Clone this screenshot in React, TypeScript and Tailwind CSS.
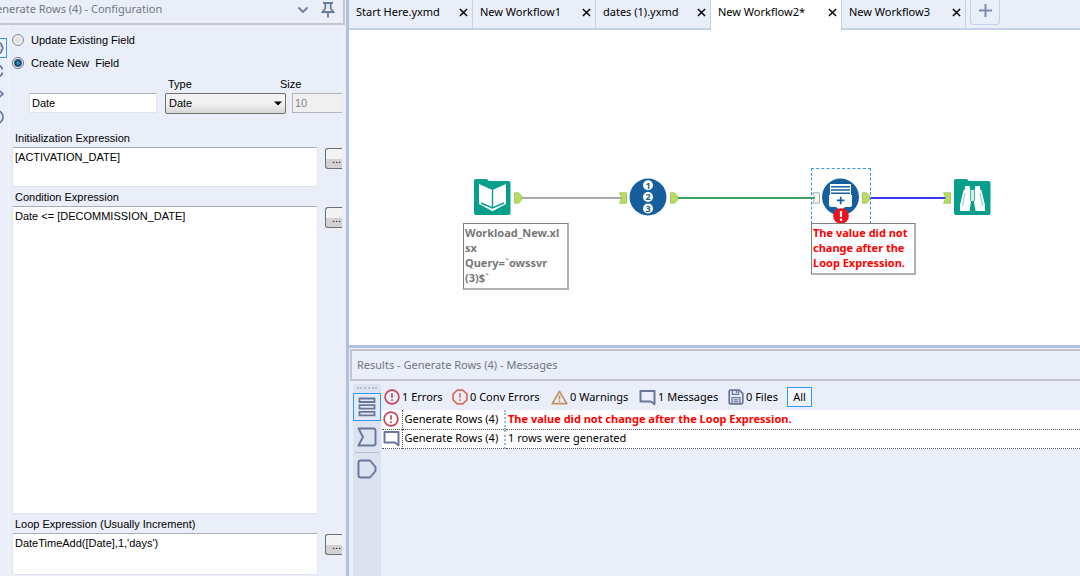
import { useState, type ReactNode } from "react";

const SEGOE = "font-['Noto_Sans',sans-serif]";
const SANS = "font-['Liberation_Sans',sans-serif]";

function CloseIcon() {
  return (
    <svg width="9" height="9" viewBox="0 0 10 10" fill="none" stroke="#000" strokeWidth="1.6">
      <path d="M1 1 9 9M9 1 1 9" />
    </svg>
  );
}

function ErrorIcon({ color = "#c8475c", size = 16 }: { color?: string; size?: number }) {
  return (
    <svg width={size} height={size} viewBox="0 0 16 16" fill="none" stroke={color} strokeWidth="1.7">
      <circle cx="8" cy="8" r="6.9" />
      <path d="M8 4.2V8.8M8 10.2V12" />
    </svg>
  );
}

function OctagonIcon() {
  return (
    <svg width="16" height="16" viewBox="0 0 16 16" fill="none" stroke="#dc6f5c" strokeWidth="1.7" strokeLinejoin="round">
      <path d="M5.2 1.1H10.8L14.9 5.2V10.8L10.8 14.9H5.2L1.1 10.8V5.2Z" />
      <path d="M8 4.2V8.8M8 10.2V12" />
    </svg>
  );
}

function WarningIcon() {
  return (
    <svg width="17" height="15" viewBox="0 0 17 15" fill="none" stroke="#c4925f" strokeWidth="1.7" strokeLinejoin="round">
      <path d="M8.5 1.4 15.8 13.7H1.2Z" />
      <path d="M8.5 5.4V9.5M8.5 10.5V12" />
    </svg>
  );
}

function MessageIcon() {
  return (
    <svg width="17" height="17" viewBox="0 0 17 17" fill="none" stroke="#6a7699" strokeWidth="2" strokeLinejoin="round">
      <path d="M1.5 2H15.5V15.2L11.8 12.5H1.5Z" />
    </svg>
  );
}

function SaveIcon() {
  return (
    <svg width="16" height="16" viewBox="0 0 16 16" fill="none" stroke="#6a7699" strokeWidth="1.7" strokeLinejoin="round">
      <path d="M1.2 2.4Q1.2 1.2 2.4 1.2H11.4L14.8 4.6V13.6Q14.8 14.8 13.6 14.8H2.4Q1.2 14.8 1.2 13.6Z" />
      <path d="M4.4 1.2V5.4H10.6V1.2M8.4 2V4M4 14.8V8.6H12V14.8M5.6 10.8H10.4M5.6 12.8H10.4" strokeWidth="1.3" />
    </svg>
  );
}

function Tab({ name, width, active = false }: { name: string; width: string; active?: boolean }) {
  return (
    <div
      className={`${width} flex shrink-0 items-center justify-between border-r border-[#c5d0e6] pr-1 pl-[7px] ${
        active ? "bg-white pb-1.5" : "border-b-2 bg-[#e9eef9] pb-1"
      }`}
    >
      <button className="text-[11px] leading-5 whitespace-nowrap">{name}</button>
      <button aria-label={`Close ${name}`}>
        <CloseIcon />
      </button>
    </div>
  );
}

function Expression({ id, label, value, size }: { id: string; label: string; value: string; size: string }) {
  return (
    <div className={`flex flex-col gap-px ${size}`}>
      <label htmlFor={id} className="pl-[3px] leading-4">
        {label}
      </label>
      <div className="flex flex-1 items-start gap-[7px]">
        <textarea
          id={id}
          defaultValue={value}
          spellCheck={false}
          className="h-full min-w-0 flex-1 resize-none rounded-xs border border-[#dfe4ee] border-t-[#a9adb8] bg-white px-0.5 py-px leading-4 outline-none"
        />
        <button
          aria-label={`Edit ${label}`}
          className="mt-px h-[21px] w-[17px] overflow-hidden rounded-l-[3px] border border-r-0 border-[#707070] bg-linear-to-b from-[#f3f3f3] from-50% to-[#d2d2d2] to-50% pl-1.5 text-left leading-5"
        >
          ...
        </button>
      </div>
    </div>
  );
}

function RadioRow({ id, label, checked, onChange }: { id: string; label: string; checked: boolean; onChange: () => void }) {
  return (
    <div className="flex h-5 items-center gap-[7px]">
      <input
        type="radio"
        id={id}
        name="fieldMode"
        checked={checked}
        onChange={onChange}
        className="size-3 appearance-none rounded-full border border-[#8b8f94] bg-radial from-[#d8dadd] to-[#f6f6f6] checked:border-[#6d7b86] checked:from-[#35b5ea] checked:from-0% checked:via-[#123c5c] checked:via-45% checked:to-[#f1f3f5] checked:to-65%"
      />
      <label htmlFor={id} className="whitespace-pre">
        {label}
      </label>
    </div>
  );
}

function ConfigurationPanel() {
  const [mode, setMode] = useState("create");
  return (
    <aside className="flex w-[346px] shrink-0 flex-col pr-px">
      <header className="flex h-[25px] shrink-0 items-center overflow-hidden border-r-2 border-b-2 border-[#c3c5c9] pr-2 pb-1">
        <h2 className={`-ml-3 flex-1 text-[11px] whitespace-nowrap text-[#727780] ${SEGOE}`}>Generate Rows (4) - Configuration</h2>
        <button aria-label="Panel menu" className="mr-3">
          <svg width="12" height="8" viewBox="0 0 12 8" fill="none" stroke="#697a9c" strokeWidth="1.8">
            <path d="M1.5 1.5 6 6 10.5 1.5" />
          </svg>
        </button>
        <button aria-label="Pin panel">
          <svg width="14" height="17" viewBox="0 0 14 17" fill="none" stroke="#697a9c" strokeWidth="1.8">
            <path d="M2 2H12M4.3 2V7.5L1.5 11H12.5L9.7 7.5V2M7 11V16.5" />
          </svg>
        </button>
      </header>
      <div className="flex min-h-0 flex-1">
        <nav className="flex w-2 shrink-0 flex-col items-end gap-[3px] overflow-hidden pt-[13px] pr-px">
          <button aria-label="Configuration" className="flex h-5 w-6 shrink-0 items-center justify-end border border-[#3298fd] bg-[#f1f5fc] pr-0.5">
            <svg width="16" height="16" viewBox="0 0 16 16" fill="none" stroke="#697a9c" strokeWidth="1.8">
              <circle cx="8" cy="8" r="2" />
              <path d="M8 1.5A2.2 2.2 0 0 1 11.5 3A2.2 2.2 0 0 1 13.5 6A2.2 2.2 0 0 1 13.5 10A2.2 2.2 0 0 1 11.5 13A2.2 2.2 0 0 1 8 14.5A2.2 2.2 0 0 1 4.5 13A2.2 2.2 0 0 1 2.5 10A2.2 2.2 0 0 1 2.5 6A2.2 2.2 0 0 1 4.5 3A2.2 2.2 0 0 1 8 1.5Z" />
            </svg>
          </button>
          <button aria-label="Navigation" className="h-5 pr-[3px]">
            <svg width="16" height="16" viewBox="0 0 16 16" fill="none" stroke="#697a9c" strokeWidth="1.8">
              <path d="M10.5 2Q14 3.5 14.5 6.5M14.5 9.5Q14 12.5 10.5 14M5.5 2Q2 3.5 1.5 6.5M1.5 9.5Q2 12.5 5.5 14" />
            </svg>
          </button>
          <button aria-label="XML" className="h-5 pr-[3px]">
            <svg width="16" height="16" viewBox="0 0 16 16" fill="none" stroke="#697a9c" strokeWidth="1.8">
              <path d="M6 4 2 8 6 12M11 4.5 15 8 11 11.5" />
            </svg>
          </button>
          <button aria-label="Help" className="h-5 pr-[3px]">
            <svg width="16" height="16" viewBox="0 0 16 16" fill="none" stroke="#697a9c" strokeWidth="1.8">
              <circle cx="8.5" cy="8" r="6.5" />
              <path d="M6 6.5Q6 4.5 8 4.5T10 6.5T8 9M8 10.5V12" />
            </svg>
          </button>
        </nav>
        <form className={`mr-[3px] flex min-w-0 flex-1 flex-col border-l border-[#f1f4f9] pt-[5px] pb-px pl-[3px] text-[11px] ${SANS}`}>
          <div className="flex flex-col gap-[3px]">
            <RadioRow id="update" label="Update Existing Field" checked={mode === "update"} onChange={() => setMode("update")} />
            <RadioRow id="create" label="Create New  Field" checked={mode === "create"} onChange={() => setMode("create")} />
          </div>
          <div className="mt-[3px] flex items-end pl-[17px]">
            <input
              aria-label="Field name"
              defaultValue="Date"
              className="mr-2 mb-px h-5 w-32 border border-[#dfe4ee] border-t-[#a9adb8] bg-white px-0.5 outline-none"
            />
            <div className="mr-1.5 flex flex-col gap-px">
              <label htmlFor="type" className="pl-[3px] leading-4">
                Type
              </label>
              <div className="relative">
                <select
                  id="type"
                  defaultValue="Date"
                  className="block h-[21px] w-[121px] appearance-none rounded-xs border border-[#707070] bg-linear-to-b from-[#f2f2f2] from-50% to-[#d6d6d6] pl-[3px] outline-none"
                >
                  <option>Date</option>
                  <option>DateTime</option>
                  <option>Int32</option>
                </select>
                <svg className="pointer-events-none absolute top-2 right-1" width="8" height="5" viewBox="0 0 8 5">
                  <path d="M0 .5H8L4 4.5Z" />
                </svg>
              </div>
            </div>
            <div className="-ml-3 mb-px flex min-w-0 flex-1 flex-col gap-px">
              <label htmlFor="size" className="leading-4">
                Size
              </label>
              <div className="flex pl-3">
                <input
                  id="size"
                  disabled
                  defaultValue="10"
                  className="h-5 w-full min-w-0 border border-r-0 border-[#b4b6ba] bg-[#f0f0f0] px-0.5 text-[#838383]"
                />
              </div>
            </div>
          </div>
          <div className="mt-4 flex min-h-0 flex-1 flex-col gap-0.5">
            <Expression id="init" label="Initialization Expression" value="[ACTIVATION_DATE]" size="h-[57px] shrink-0" />
            <Expression id="condition" label="Condition Expression" value="Date <= [DECOMMISSION_DATE]" size="min-h-20 flex-1" />
            <Expression id="loop" label="Loop Expression (Usually Increment)" value="DateTimeAdd([Date],1,'days')" size="h-[59px] shrink-0" />
          </div>
        </form>
      </div>
    </aside>
  );
}

function Output() {
  return (
    <svg width="8" height="12" viewBox="0 0 8 12" fill="#b9dc62" stroke="#9cc04b" strokeWidth=".8">
      <path d="M.5.8H4.5L7.5 4V8L4.5 11.2H.5Z" />
    </svg>
  );
}

function Input({ muted = false }: { muted?: boolean }) {
  return (
    <svg width="8" height="12" viewBox="0 0 8 12" fill={muted ? "#f3f3f3" : "#b9dc62"} stroke={muted ? "#9a9a9a" : "#9cc04b"} strokeWidth=".8">
      <path d="M.5.8H7.5V11.2H.5L2.8 6Z" />
    </svg>
  );
}

function Place({ at, children }: { at: string; children: ReactNode }) {
  return <div className={`absolute ${at}`}>{children}</div>;
}

function Canvas() {
  return (
    <main className="relative min-h-0 flex-1 overflow-hidden bg-white">
      <Place at="left-[170px] top-[166px]">
        <svg width="430" height="4" viewBox="0 0 430 4" strokeWidth="2" fill="none">
          <path d="M0 2H108" stroke="#a9a9a9" />
          <path d="M157 2H300" stroke="#3aa35c" />
          <path d="M350 2H430" stroke="#3a36f0" />
        </svg>
      </Place>

      <Place at="left-[125px] top-[148px]">
        <svg width="37" height="38" viewBox="0 0 37 38">
          <path d="M0 3Q0 1 2 1H12Q14 1 14.5 3H34.5Q36.5 3 36.5 5V35Q36.5 37 34.5 37H2Q0 37 0 35Z" fill="#079e8c" />
          <path d="M5 6 18.5 12 32 6V26L18.5 33.2 5 26Z" fill="#fff" />
          <path d="M18.5 12V29" stroke="#079e8c" strokeWidth="1.4" />
          <path d="M7 25 18.5 30 30 25" fill="none" stroke="#079e8c" strokeWidth="1.6" />
        </svg>
      </Place>
      <Place at="left-[165px] top-[162px]"><Output /></Place>
      <Place at="left-[114px] top-[193px]">
        <p className="w-[106px] border-t border-r-2 border-b-2 border-l border-[#808080] border-r-[#b0b0b0] border-b-[#b0b0b0] bg-white px-px py-px pb-[3px] text-[11px] leading-[15px] font-bold break-all text-[#777]">
          Workload_New.xl
          <br />
          sx
          <br />
          Query=`owssvr
          <br />
          (3)$`
        </p>
      </Place>

      <Place at="left-[270px] top-[162px]"><Input /></Place>
      <Place at="left-[280px] top-[148px]">
        <svg width="38" height="38" viewBox="0 0 38 38">
          <circle cx="19" cy="19" r="18.5" fill="#155f9e" />
          <g fill="#fff">
            <circle cx="19" cy="7.3" r="5" />
            <circle cx="19" cy="19" r="5" />
            <circle cx="19" cy="30.5" r="5" />
          </g>
          <g fill="#155f9e" className={SEGOE} fontSize="9" fontWeight="700" textAnchor="middle">
            <text x="19" y="10.6">1</text>
            <text x="19" y="22.3">2</text>
            <text x="19" y="33.8">3</text>
          </g>
        </svg>
      </Place>
      <Place at="left-[321px] top-[162px]"><Output /></Place>

      <Place at="left-[462px] top-[138px]">
        <div className="h-14 w-[60px] border border-dashed border-[#3298e0]" />
      </Place>
      <Place at="left-[463px] top-[162px]"><Input muted /></Place>
      <Place at="left-[472px] top-[148px]">
        <svg width="38" height="46" viewBox="0 0 38 46">
          <circle cx="19.5" cy="19" r="18.5" fill="#155f9e" />
          <path d="M9 6H30V17.5H9Z" fill="#fff" />
          <path d="M10 8.7H29M10 12H29M10 15.3H29" stroke="#155f9e" strokeWidth="1.4" />
          <path d="M8 17H31V27Q31 29 29 29H24L19.5 33 15 29H10Q8 29 8 27Z" fill="#fff" />
          <path d="M16 22.4H23.5M19.7 18.7V26.2" stroke="#155f9e" strokeWidth="1.7" />
          <circle cx="20" cy="38" r="7.8" fill="#ed1119" />
          <path d="M20 33V39M20 40.6V43" stroke="#fff" strokeWidth="2.2" />
        </svg>
      </Place>
      <Place at="left-[513px] top-[162px]"><Output /></Place>
      <Place at="left-[462px] top-[193px]">
        <p className="w-[105px] border-t border-r-2 border-b-2 border-l border-[#808080] border-r-[#b0b0b0] border-b-[#b0b0b0] bg-white px-px py-px pb-[3px] text-[11px] leading-[15px] font-bold whitespace-nowrap text-[#f00]">
          The value did not
          <br />
          change after the
          <br />
          Loop Expression.
        </p>
      </Place>

      <Place at="left-[594px] top-[162px]"><Input /></Place>
      <Place at="left-[605px] top-[148px]">
        <svg width="37" height="38" viewBox="0 0 37 38">
          <path d="M0 3Q0 1 2 1H12Q14 1 14.5 3H34.5Q36.5 3 36.5 5V35Q36.5 37 34.5 37H2Q0 37 0 35Z" fill="#079e8c" />
          <g fill="#fff">
            <path d="M11 8H15.8V11L17 12.5V24L15.5 33H6V27L9.5 12.5 11 11Z" />
            <path d="M26 8H21.2V11L20 12.5V24L21.5 33H31V27L27.5 12.5 26 11Z" />
            <path d="M16.9 12H20.1V23H16.9Z" fill="#d9f2ee" />
          </g>
          <path d="M11 15 8.5 28M26 15 28.5 28" stroke="#8fd4ca" strokeWidth="1.2" />
          <path d="M16.6 12V23M20.4 12V23" stroke="#079e8c" strokeWidth=".8" />
        </svg>
      </Place>
    </main>
  );
}

function ResultsPanel() {
  return (
    <section className="flex h-[231px] shrink-0 flex-col border-t-3 border-[#b1c0e0] pl-px">
      <header className="mt-px flex h-8 shrink-0 items-center border-2 border-r-0 border-[#c3c5c9] pl-[5px]">
        <h2 className="text-[11px] text-[#727780]">Results - Generate Rows (4) - Messages</h2>
      </header>
      <div className="flex min-h-0 flex-1 pt-[3px] pl-[3px]">
        <nav className="flex w-7 shrink-0 flex-col items-center rounded-t-sm bg-[#dbe2f0] pt-[3px]">
          <div className="mb-1 h-0 w-5 border-t-2 border-dotted border-[#b9c0cd]" />
          <button aria-label="Messages" className="flex h-7 w-7 items-center justify-center border border-[#3298fd] bg-[#e3eaf7]">
            <svg width="18" height="20" viewBox="0 0 18 20" fill="none" stroke="#6a7699" strokeWidth="1.8">
              <path d="M1.5 1.5H16.5V5H1.5ZM1.5 8.2H16.5V11.7H1.5ZM1.5 14.9H16.5V18.4H1.5Z" />
            </svg>
          </button>
          <button aria-label="Input data" className="flex h-[31px] items-center">
            <svg width="20" height="20" viewBox="0 0 20 20" fill="none" stroke="#6a7699" strokeWidth="1.9" strokeLinejoin="round">
              <path d="M1.5 1.5H16.5Q18.5 1.5 18.5 3.5V16.5Q18.5 18.5 16.5 18.5H1.5L6 10Z" />
            </svg>
          </button>
          <div className="h-px w-6 bg-[#babec6]" />
          <button aria-label="Output data" className="flex h-8 items-center">
            <svg width="20" height="20" viewBox="0 0 20 20" fill="none" stroke="#6a7699" strokeWidth="1.9" strokeLinejoin="round">
              <path d="M3.5 1.5H13L18.5 8V12L13 18.5H3.5Q1.5 18.5 1.5 16.5V3.5Q1.5 1.5 3.5 1.5Z" />
            </svg>
          </button>
        </nav>
        <div className="min-w-0 flex-1 pl-px">
          <div className="flex h-[26px] items-center pl-0.5 text-[11px] whitespace-nowrap">
            <button className="flex w-17 items-center gap-0.5"><ErrorIcon />1 Errors</button>
            <button className="flex w-[99px] items-center gap-0.5"><OctagonIcon />0 Conv Errors</button>
            <button className="flex w-[88px] items-center gap-0.5"><WarningIcon />0 Warnings</button>
            <button className="flex w-[89px] items-center gap-0.5"><MessageIcon />1 Messages</button>
            <button className="flex w-[59px] items-center gap-0.5"><SaveIcon />0 Files</button>
            <button className="h-5 w-[25px] border border-[#3298fd] bg-[#f1f5fc] leading-4">All</button>
          </div>
          <table className="w-full border-collapse bg-white text-[11px] whitespace-nowrap">
            <tbody>
              <tr className="h-[19px] border-b border-dotted border-[#555]">
                <td className="w-5 border-r border-dotted border-[#555] p-0 pl-px"><ErrorIcon /></td>
                <td className="w-[103px] border-r-2 border-dotted border-[#9db8dd] p-0 pl-0.5">Generate Rows (4)</td>
                <td className="p-0 pl-0.5 font-bold text-[#f00]">The value did not change after the Loop Expression.</td>
              </tr>
              <tr className="h-[19px] border-b border-dotted border-[#555]">
                <td className="border-r border-dotted border-[#555] p-0 pl-px"><MessageIcon /></td>
                <td className="border-r-2 border-dotted border-[#9db8dd] p-0 pl-0.5">Generate Rows (4)</td>
                <td className="p-0 pl-0.5">1 rows were generated</td>
              </tr>
            </tbody>
          </table>
        </div>
      </div>
    </section>
  );
}

export default function App() {
  return (
    <div className={`flex h-screen overflow-hidden bg-[#e9eef9] text-black ${SEGOE}`}>
      <ConfigurationPanel />
      <div className="flex min-w-0 flex-1 flex-col border-l-3 border-[#b1c0e0]">
        <div className="flex h-[30px] shrink-0">
          <Tab name="Start Here.yxmd" width="w-[124px]" />
          <Tab name="New Workflow1" width="w-[123px]" />
          <Tab name="dates (1).yxmd" width="w-[115px]" />
          <Tab name="New Workflow2*" width="w-[131px]" active />
          <Tab name="New Workflow3" width="w-[124px]" />
          <div className="flex-1 border-b-2 border-[#c5d0e6] pl-1">
            <button aria-label="New tab" className="flex h-[25px] w-[30px] items-center justify-center rounded-b-sm border border-t-0 border-[#c5d0e6] pb-1">
              <svg width="13" height="13" viewBox="0 0 13 13" stroke="#7d8aab" strokeWidth="2">
                <path d="M0 6.5H13M6.5 0V13" />
              </svg>
            </button>
          </div>
        </div>
        <Canvas />
        <ResultsPanel />
      </div>
    </div>
  );
}
